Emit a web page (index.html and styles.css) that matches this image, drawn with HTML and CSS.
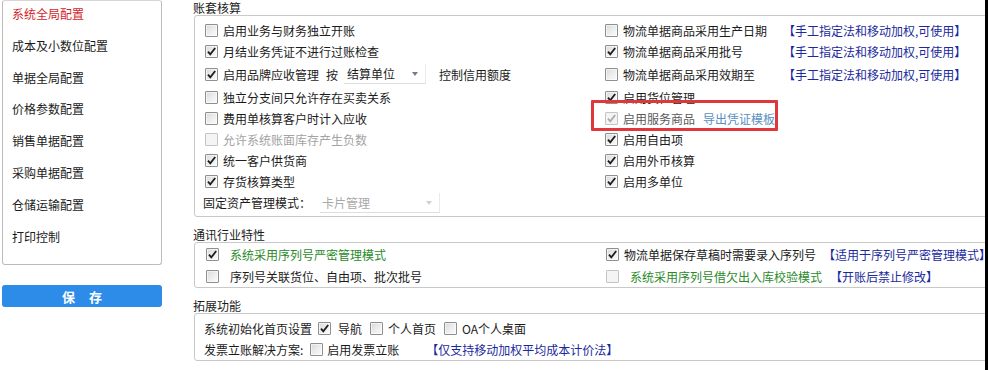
FILE: index.html
```html
<!DOCTYPE html>
<html lang="zh-CN">
<head>
<meta charset="utf-8">
<title>系统全局配置</title>
<link rel="stylesheet" href="styles.css">
</head>
<body>
<div class="page">
  <aside class="side">
    <ul class="menu">
      <li class="active">系统全局配置</li>
      <li>成本及小数位配置</li>
      <li>单据全局配置</li>
      <li>价格参数配置</li>
      <li>销售单据配置</li>
      <li>采购单据配置</li>
      <li>仓储运输配置</li>
      <li>打印控制</li>
    </ul>
    <button class="save"><span>保</span><span>存</span></button>
  </aside>

  <main class="main">
    <section class="group">
      <div class="legend">账套核算</div>
      <div class="box box-acct">
        <div class="opt"><span class="cb"></span>启用业务与财务独立开账</div>
        <div class="opt"><span class="opt-main"><span class="cb"></span>物流单据商品采用生产日期</span><span class="link">【手工指定法和移动加权,可使用】</span></div>

        <div class="opt"><span class="cb on"><svg viewBox="0 0 11 11"><path d="M2 5.6 L4.3 8.4 L9.2 2"/></svg></span>月结业务凭证不进行过账检查</div>
        <div class="opt"><span class="opt-main"><span class="cb on"><svg viewBox="0 0 11 11"><path d="M2 5.6 L4.3 8.4 L9.2 2"/></svg></span>物流单据商品采用批号</span><span class="link">【手工指定法和移动加权,可使用】</span></div>

        <div class="opt"><span class="cb on"><svg viewBox="0 0 11 11"><path d="M2 5.6 L4.3 8.4 L9.2 2"/></svg></span>启用品牌应收管理<span class="by">按</span><span class="select sel-unit">结算单位<i class="arrow"></i></span><span class="after">控制信用额度</span></div>
        <div class="opt"><span class="opt-main"><span class="cb"></span>物流单据商品采用效期至</span><span class="link">【手工指定法和移动加权,可使用】</span></div>

        <div class="opt"><span class="cb"></span>独立分支间只允许存在买卖关系</div>
        <div class="opt"><span class="cb on"><svg viewBox="0 0 11 11"><path d="M2 5.6 L4.3 8.4 L9.2 2"/></svg></span>启用货位管理</div>

        <div class="opt"><span class="cb"></span>费用单核算客户时计入应收</div>
        <div class="opt dim"><span class="cb on off"><svg viewBox="0 0 11 11"><path d="M2 5.6 L4.3 8.4 L9.2 2"/></svg></span>启用服务商品<span class="export">导出凭证模板</span></div>

        <div class="opt disabled"><span class="cb off"></span>允许系统账面库存产生负数</div>
        <div class="opt"><span class="cb on"><svg viewBox="0 0 11 11"><path d="M2 5.6 L4.3 8.4 L9.2 2"/></svg></span>启用自由项</div>

        <div class="opt"><span class="cb on"><svg viewBox="0 0 11 11"><path d="M2 5.6 L4.3 8.4 L9.2 2"/></svg></span>统一客户供货商</div>
        <div class="opt"><span class="cb on"><svg viewBox="0 0 11 11"><path d="M2 5.6 L4.3 8.4 L9.2 2"/></svg></span>启用外币核算</div>

        <div class="opt"><span class="cb on"><svg viewBox="0 0 11 11"><path d="M2 5.6 L4.3 8.4 L9.2 2"/></svg></span>存货核算类型</div>
        <div class="opt"><span class="cb on"><svg viewBox="0 0 11 11"><path d="M2 5.6 L4.3 8.4 L9.2 2"/></svg></span>启用多单位</div>

        <div class="opt asset">固定资产管理模式：<span class="select sel-asset">卡片管理<i class="arrow"></i></span></div>
      </div>
    </section>

    <section class="group">
      <div class="legend">通讯行业特性</div>
      <div class="box box-comm">
        <div class="opt"><span class="cb on wide"><svg viewBox="0 0 11 11"><path d="M2 5.6 L4.3 8.4 L9.2 2"/></svg></span><span class="green">系统采用序列号严密管理模式</span></div>
        <div class="opt"><span class="cb on"><svg viewBox="0 0 11 11"><path d="M2 5.6 L4.3 8.4 L9.2 2"/></svg></span>物流单据保存草稿时需要录入序列号<span class="link near">【适用于序列号严密管理模式】</span></div>
        <div class="opt"><span class="cb wide"></span>序列号关联货位、自由项、批次批号</div>
        <div class="opt"><span class="cb off wide"></span><span class="green">系统采用序列号借欠出入库校验模式</span><span class="link near2">【开账后禁止修改】</span></div>
      </div>
    </section>

    <section class="group">
      <div class="legend">拓展功能</div>
      <div class="box box-ext">
        <div class="opt">系统初始化首页设置<span class="cb on m1"><svg viewBox="0 0 11 11"><path d="M2 5.6 L4.3 8.4 L9.2 2"/></svg></span><span class="t1">导航</span><span class="cb m2"></span><span class="t2">个人首页</span><span class="cb m2"></span><span class="t2">OA个人桌面</span></div>
        <div class="opt">发票立账解决方案:<span class="cb m3"></span><span class="t3">启用发票立账</span><span class="link far">【仅支持移动加权平均成本计价法】</span></div>
      </div>
    </section>

    <div class="mark"></div>
  </main>

  <div class="edge"></div>
</div>
</body>
</html>
```

FILE: styles.css
```css
* { box-sizing: border-box; }

html, body {
  margin: 0;
  padding: 0;
  background: #ffffff;
}

body {
  width: 988px;
  height: 370px;
  overflow: hidden;
  font-family: "Noto Sans CJK SC", "Microsoft YaHei", sans-serif;
  font-size: 12px;
  color: #1b1b1b;
}

.page {
  display: flex;
  height: 370px;
}

/* ---------- left side ---------- */
.side {
  width: 160px;
  margin-left: 2px;
  flex: none;
}

.menu {
  list-style: none;
  margin: 0;
  padding: 0 0 0 9px;
  height: 265px;
  border: 1px solid #bcbcbc;
  border-top-color: #d6d6d6;
  border-radius: 3px;
}

.menu li {
  padding: 4px 0 9.8px;
  line-height: 18px;
  white-space: nowrap;
  color: #1b1b1b;
}

.menu li.active { color: #d21f2b; }

.save {
  display: flex;
  justify-content: center;
  align-items: center;
  gap: 14px;
  width: 160px;
  height: 22px;
  margin-top: 20px;
  padding: 0;
  border: none;
  border-radius: 3px;
  background: #2d8ce8;
  color: #ffffff;
  font-family: "Noto Sans CJK SC", sans-serif;
  font-size: 13px;
  font-weight: bold;
}

/* ---------- main ---------- */
.main {
  position: relative;
  width: 792px;
  margin-left: 31px;
  flex: none;
  overflow: hidden;
}

.group + .group { margin-top: 10px; }

.legend {
  height: 15px;
  line-height: 15px;
  white-space: nowrap;
}

.box {
  width: 810px;
  margin-left: 1px;
  border: 1px solid #c9c9c9;
  border-radius: 3px;
  display: grid;
  grid-template-columns: 400px auto;
}

.box-acct {
  padding: 4px 0 3px 10px;
  grid-template-rows: 21px 21px 24px 22px 21px 21px 21px 21px 21px;
}

.box-comm {
  padding: 0 0 0 11px;
  grid-template-rows: 22px 22px;
}

.box-ext {
  padding: 3px 0 0 9px;
  grid-template-columns: auto;
  grid-template-rows: 22px 21px;
}

.opt {
  display: flex;
  align-items: center;
  white-space: nowrap;
}

.opt-main {
  display: flex;
  align-items: center;
  width: 178px;
}

/* ---------- checkbox ---------- */
.cb {
  flex: none;
  width: 13px;
  height: 13px;
  margin-right: 5px;
  border: 1px solid #8e8f8f;
  border-radius: 1px;
  background: linear-gradient(135deg, #d9d9d9 0%, #eeeeee 55%, #fbfbfb 100%);
  box-shadow: inset 0 0 0 1px rgba(255, 255, 255, 0.55);
  display: inline-flex;
}

.cb svg {
  width: 11px;
  height: 11px;
}

.cb svg path {
  fill: none;
  stroke: #1c1c1c;
  stroke-width: 1.8;
  stroke-linejoin: miter;
}

.cb.off {
  border-color: #c4c4c4;
  background: #f4f4f4;
  box-shadow: none;
}

.cb.off svg path { stroke: #a9a9a9; }

.cb.wide { margin-right: 11px; }

.disabled { color: #a3a3a3; }
.dim { color: #5a5a5a; }

/* ---------- select ---------- */
.by { margin-left: 7px; }

.select {
  position: relative;
  display: inline-flex;
  align-items: center;
  height: 20px;
  padding-left: 3px;
  border-bottom: 1px solid #dedede;
  border-right: 1px solid #eaeaea;
}

.sel-unit {
  width: 82px;
  margin-left: 6px;
}

.sel-asset {
  width: 120px;
  margin-left: 9px;
  padding-left: 2px;
  color: #a8a8a8;
}

.arrow {
  position: absolute;
  right: 7px;
  top: 8px;
  width: 0;
  height: 0;
  border-left: 3px solid transparent;
  border-right: 3px solid transparent;
  border-top: 4px solid #6f7d8c;
}

.sel-asset .arrow { border-top-color: #d2d2d2; }

.after { margin-left: 13px; }

.asset { margin-left: -2px; }

/* ---------- links / colours ---------- */
.link { color: #1a2a9c; }
.link.near { margin-left: 7px; }
.link.near2 { margin-left: 8px; }
.link.far { margin-left: 27px; }

.export {
  margin-left: 8px;
  color: #5b8fc0;
}

.green { color: #2a8a2a; }

/* ---------- extension row ---------- */
.cb.m1 { margin-left: 6px; margin-right: 7px; }
.cb.m2 { margin-left: 8px; margin-right: 5px; }
.cb.m3 { margin-left: 7px; margin-right: 4px; }

/* ---------- annotation ---------- */
.mark {
  position: absolute;
  left: 398px;
  top: 100px;
  width: 187px;
  height: 31px;
  border: 3px solid #e0373d;
  border-radius: 1px;
}

.edge {
  width: 3px;
  flex: none;
  background: #000000;
}
```
